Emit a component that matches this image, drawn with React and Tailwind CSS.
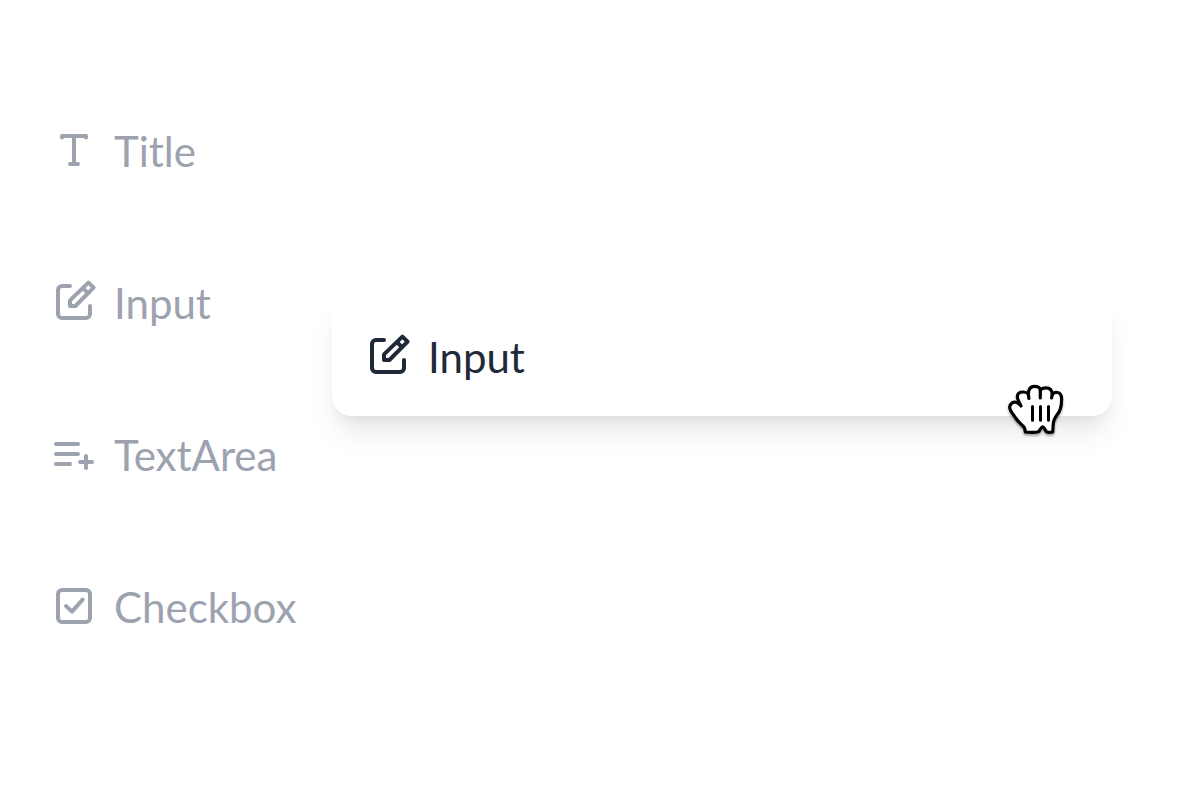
import React from "react";

const Icon = ({ children }) => (
  <svg
    viewBox="0 0 24 24"
    className="size-12 shrink-0"
    fill="none"
    stroke="currentColor"
    strokeWidth="2"
    strokeLinecap="round"
    strokeLinejoin="round"
    aria-hidden="true"
  >
    {children}
  </svg>
);

const TitleIcon = () => (
  <Icon>
    <path d="M6 5.800V5h12v.8M12 5v14M10 19h4" />
  </Icon>
);

const InputIcon = () => (
  <Icon>
    <path d="M10 4H6a2 2 0 0 0-2 2v12a2 2 0 0 0 2 2h12a2 2 0 0 0 2-2v-4" />
    <path d="M10 14v-2.800l9.200-8.900 2.600 2.500-9.100 9.200zM16.400 5l2.700 2.700" />
  </Icon>
);

const TextAreaIcon = () => (
  <Icon>
    <path d="M3 7h11M3 12h11M3 17h7M18 13v6M15 16h6" />
  </Icon>
);

const CheckboxIcon = () => (
  <Icon>
    <rect x="4" y="4" width="16" height="16" rx="2" />
    <path d="M8 12l3 2.800 5.300-6" />
  </Icon>
);

const fields = [
  { label: "Title", icon: TitleIcon },
  { label: "Input", icon: InputIcon },
  { label: "TextArea", icon: TextAreaIcon },
  { label: "Checkbox", icon: CheckboxIcon },
];

const HandCursor = () => (
  <svg
    viewBox="0 0 80 80"
    className="pointer-events-none absolute right-[37px] bottom-[-34px] size-20 drop-shadow-[0_2px_1px_rgba(0,0,0,0.35)]"
    fill="none"
    stroke="#000"
    strokeWidth="3.2"
    strokeLinecap="round"
    strokeLinejoin="round"
    aria-hidden="true"
  >
    <path
      fill="#fff"
      d="M30.300 62C30.300 59.500 30 58 28.500 56.500C25.500 53.500 23 51.500 21 48.500C18.500 44.500 14.500 40.500 14.700 37C15 33.500 18 31.500 21.500 32.500C23.500 33 24.800 34.500 26 36C24.500 32 22.300 30 22.300 26.500C22.500 23.500 25 22 28 22C30.500 22 32 22.500 33.300 24C33.500 19 35.500 16.300 39.500 16.300C43 16.300 45 18 45.300 20C46.500 18.500 48.500 17.800 51 17.800C55 17.800 57 20 57.300 24.500C58.500 22.700 60.500 22 62.500 22.500C66 23 66.700 26 66.600 29.500C66.500 34.500 66 38.500 64 42C62 45 59 48.500 58.400 52.500C58 56 58 59 57.700 62C55.500 62.400 53.500 62.400 51.700 62C50 60 49 56.800 47.700 56.800C46.300 56.800 45 60 43.500 61.700C40 62.600 35 62.400 30.300 62Z"
    />
    <path d="M33.300 24l.6 4.500M45.300 20v8M57.300 24l-.7 4" />
    <path strokeWidth="3" d="M37.500 36.500v13.700M45.500 36.500v13.700M53.500 36.500v13.700" />
  </svg>
);

const App = () => {
  return (
    <main className="relative min-h-screen bg-white px-[50px] pt-[126px] font-['Lato','Liberation_Sans',sans-serif] text-[42px] leading-[50px]">
      <ul className="flex flex-col gap-[102px] text-[#9ca3af]">
        {fields.map(({ label, icon: FieldIcon }) => (
          <li key={label} className="flex items-start gap-4">
            <FieldIcon />
            <span>{label}</span>
          </li>
        ))}
      </ul>

      {/* Field being dragged out of the list */}
      <div className="absolute top-[296px] right-[88px] left-[332px] flex h-[120px] items-start gap-4 rounded-[20px] bg-white px-8 pt-9 text-[#1f2937] shadow-[0_20px_30px_-6px_rgba(0,0,0,0.1),0_8px_12px_-4px_rgba(0,0,0,0.05)]">
        <InputIcon />
        <span>Input</span>
        <HandCursor />
      </div>
    </main>
  );
};

export default App;
